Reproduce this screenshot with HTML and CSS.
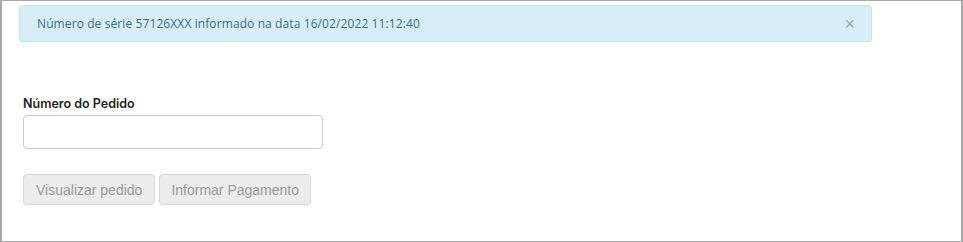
FILE: index.html
```html
<!DOCTYPE html>
<html lang="pt">
<head>
<meta charset="utf-8">
<link rel="stylesheet" href="styles.css">
</head>
<body>
<div class="frame">
  <div class="alert">
    <span class="alert-text">Número de série 57126XXX informado na data 16/02/2022 11:12:40</span>
    <span class="close">×</span>
  </div>
  <div class="form">
    <label class="label">Número do Pedido</label>
    <div class="input"></div>
    <div class="buttons">
      <button class="btn">Visualizar pedido</button>
      <button class="btn btn-pay">Informar Pagamento</button>
    </div>
  </div>
</div>
</body>
</html>
```
FILE: styles.css
```css
html, body { margin: 0; padding: 0; background: #fff; }
.frame {
  width: 963px; height: 242px; box-sizing: border-box;
  border: 1px solid #a9a9a9; border-left-width: 2px; border-right-width: 2px;
  padding: 4px 0 0 17px;
}
.alert {
  width: 853px; height: 37px; box-sizing: border-box;
  background: #d9edf7; border: 1px solid #bce8f1; border-radius: 3px;
  display: flex; align-items: center; justify-content: space-between;
  padding: 0 16px 0 17px;
  font-family: "Open Sans", sans-serif; font-size: 12px; letter-spacing: 0.1px; color: #31708f;
}
.close { color: #9aa8ae; font-family: "Liberation Sans", sans-serif; font-size: 18px; line-height: 1; }
.form { padding: 54px 0 0 4px; display: flex; flex-direction: column; align-items: flex-start; }
.label { font-family: "Inter", sans-serif; font-weight: 600; font-size: 12.5px; color: #1e1e1e; line-height: 16px; }
.input {
  margin-top: 3px; width: 300px; height: 34px; box-sizing: border-box;
  border: 1px solid #ccc; border-radius: 4px; background: #fff;
}
.buttons { margin-top: 25px; display: flex; gap: 4px; }
.btn {
  height: 31px; box-sizing: border-box; padding: 0 12px;
  background: #ececec; border: 1px solid #d6d6d6; border-radius: 4px;
  font-family: "Liberation Sans", sans-serif; font-size: 14px; color: #9a9a9a;
}
.btn-pay { padding: 0 11px; }
```
